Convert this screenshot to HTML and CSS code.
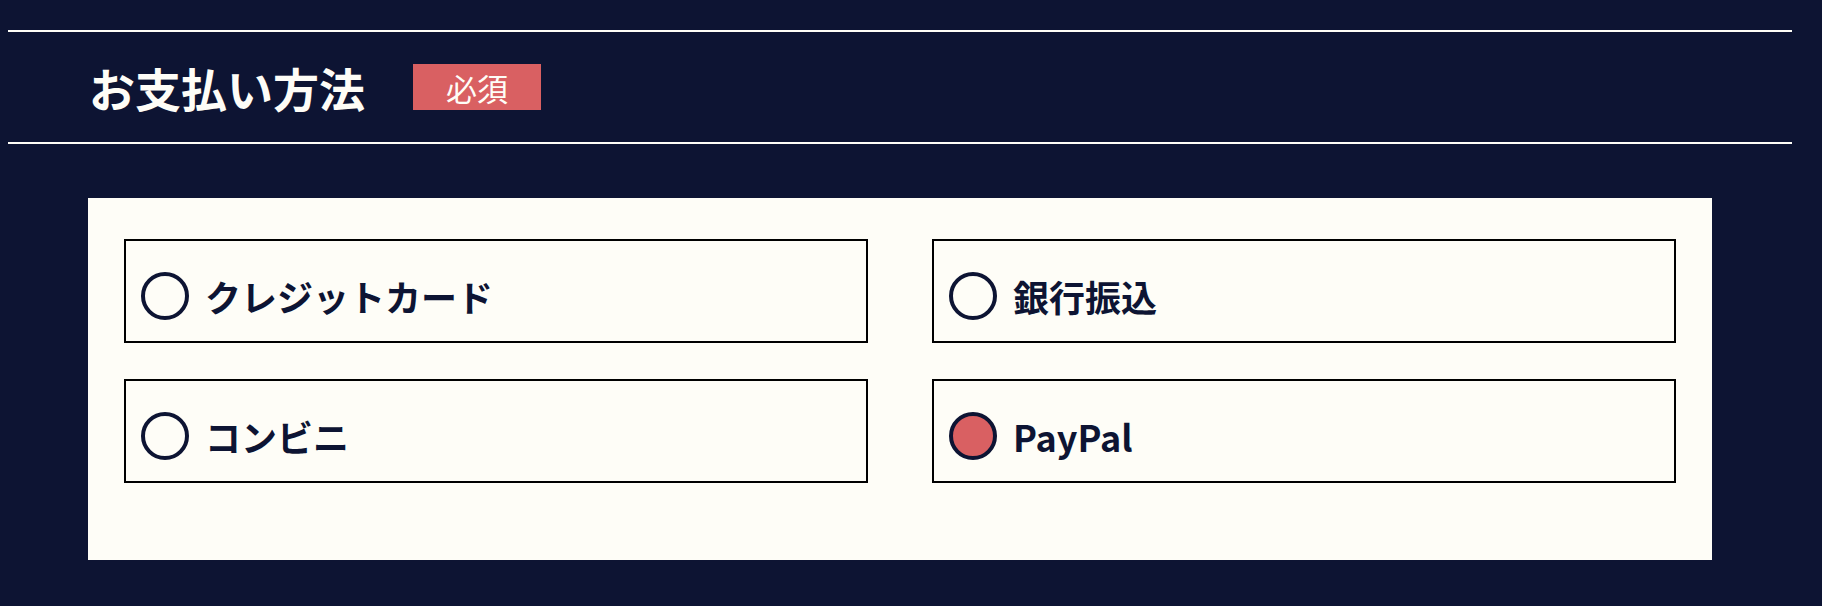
FILE: index.html
```html
<!DOCTYPE html>
<html lang="ja">
<head>
  <meta charset="UTF-8">
  <meta name="viewport" content="width=device-width, initial-scale=1.0">
  <title>お支払い方法</title>
  <link rel="stylesheet" href="styles.css">
</head>
<body>
  <div class="section-head">
    <h2 class="section-title">お支払い方法</h2>
    <span class="badge">必須</span>
  </div>

  <form class="pay-card">
    <label class="pay-option">
      <input type="radio" name="payment" value="card">
      <span>クレジットカード</span>
    </label>
    <label class="pay-option">
      <input type="radio" name="payment" value="bank">
      <span>銀行振込</span>
    </label>
    <label class="pay-option">
      <input type="radio" name="payment" value="conveni">
      <span>コンビニ</span>
    </label>
    <label class="pay-option">
      <input type="radio" name="payment" value="paypal" checked>
      <span>PayPal</span>
    </label>
  </form>
</body>
</html>
```

FILE: styles.css
```css
body {
  margin: 0;
  padding: 30px 30px 0 8px;
  background-color: #0d1433;
  font-family: "Noto Sans CJK JP", "Noto Sans", sans-serif;
  color: #0d1433;
}
.section-head {
  display: flex;
  align-items: center;
  height: 110px;
  padding-left: 81px;
  border-top: 2px solid #fefdf7;
  border-bottom: 2px solid #fefdf7;
}
.section-title {
  margin: 0;
  font-size: 46px;
  font-weight: 700;
  color: #fefdf7;
  line-height: 1;
}
.badge {
  display: flex;
  align-items: center;
  justify-content: center;
  width: 128px;
  height: 46px;
  margin-left: 48px;
  background-color: #d96062;
  color: #fefdf7;
  font-size: 31px;
  line-height: 1;
}
.pay-card {
  display: grid;
  grid-template-columns: 1fr 1fr;
  column-gap: 64px;
  row-gap: 36px;
  width: 1624px;
  box-sizing: border-box;
  margin: 54px 0 0 80px;
  padding: 41px 36px 77px;
  background-color: #fefdf7;
}
.pay-option {
  display: flex;
  align-items: center;
  height: 104px;
  box-sizing: border-box;
  padding: 9px 15px 0;
  border: 2px solid #000;
  font-size: 36px;
  font-weight: 700;
  cursor: pointer;
}
.pay-option input {
  appearance: none;
  width: 48px;
  height: 48px;
  margin: 0 16px 0 0;
  border: 4px solid #0d1433;
  border-radius: 50%;
  box-sizing: border-box;
  background: transparent;
  flex-shrink: 0;
}
.pay-option input:checked {
  background-color: #d96062;
}
```
